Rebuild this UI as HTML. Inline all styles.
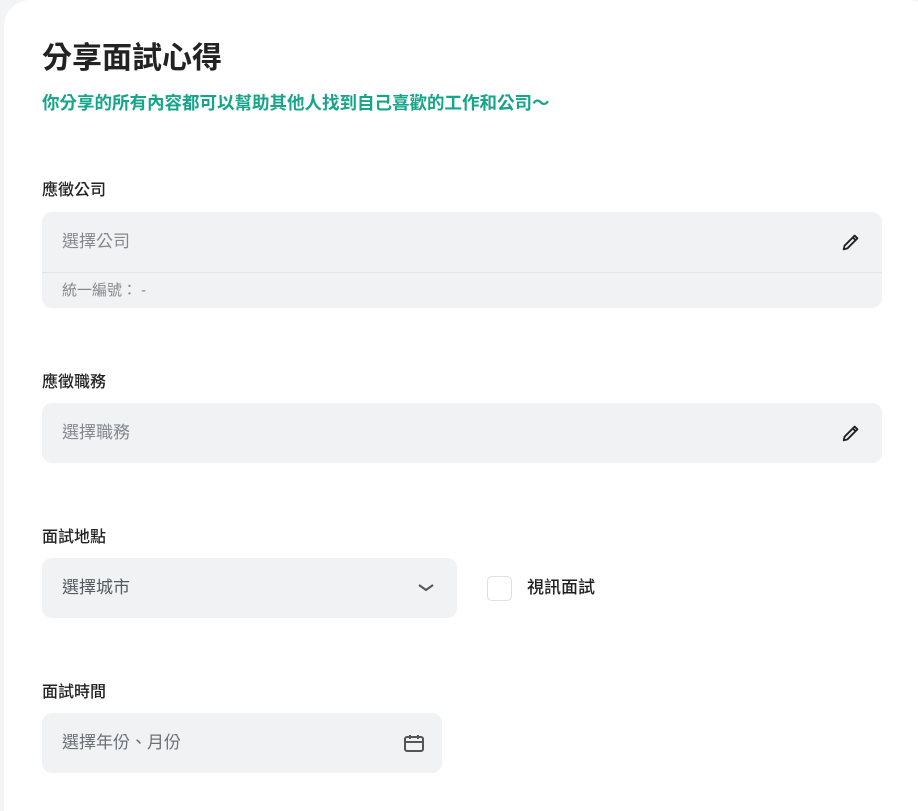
<!DOCTYPE html>
<html><head><meta charset="utf-8"><style>
*{box-sizing:border-box;margin:0;padding:0}
html,body{width:918px;height:811px;overflow:hidden;background:#f3f4f5;font-family:"Liberation Sans","Noto Sans CJK TC",sans-serif;color:#1e1e1e}
.card{position:absolute;left:4px;top:0;width:930px;height:811px;background:#fff;border-radius:26px 26px 0 0}
.a{position:absolute;white-space:nowrap}
h1{position:absolute;left:42px;top:38px;font-size:30px;font-weight:700;line-height:42px;color:#222}
.sub{left:42px;top:91px;font-size:17.5px;font-weight:700;color:#16a58a;line-height:24px}
.lbl{font-size:16px;font-weight:500;line-height:22px;color:#222;left:42px}
.box{position:absolute;background:#f1f2f4;border-radius:10px}
.ph{font-size:17px;color:#85898f;line-height:24px}
</style></head><body>
<div class="card"></div>
<h1>分享面試心得</h1>
<div class="a sub">你分享的所有內容都可以幫助其他人找到自己喜歡的工作和公司～</div>

<div class="a lbl" style="top:180px">應徵公司</div>
<div class="box" style="left:42px;top:212px;width:840px;height:96px">
 <div style="position:absolute;left:0;right:0;top:60px;height:1px;background:#e2e4e7"></div>
</div>
<div class="a ph" style="left:62px;top:230px">選擇公司</div>
<div class="a" style="left:62px;top:280px;font-size:15px;color:#85898f;line-height:22px">統一編號： -</div>
<svg class="a" style="left:840px;top:231px" width="22" height="22" viewBox="0 0 24 24" fill="none" stroke="#222" stroke-width="2" stroke-linejoin="round"><path d="M4 20l1-4L16 5l3 3L8 19z M14 7l3 3"/></svg>

<div class="a lbl" style="top:372px">應徵職務</div>
<div class="box" style="left:42px;top:403px;width:840px;height:60px"></div>
<div class="a ph" style="left:62px;top:421px">選擇職務</div>
<svg class="a" style="left:840px;top:422px" width="22" height="22" viewBox="0 0 24 24" fill="none" stroke="#222" stroke-width="2" stroke-linejoin="round"><path d="M4 20l1-4L16 5l3 3L8 19z M14 7l3 3"/></svg>

<div class="a lbl" style="top:527px">面試地點</div>
<div class="box" style="left:42px;top:558px;width:415px;height:60px"></div>
<div class="a ph" style="left:62px;top:576px;color:#555a60">選擇城市</div>
<svg class="a" style="left:416px;top:580px" width="20" height="16" viewBox="0 0 20 16" fill="none" stroke="#555" stroke-width="2"><path d="M3 5l7 5 7-5"/></svg>
<div class="a" style="left:487px;top:576px;width:25px;height:25px;border:1px solid #dcdfe3;border-radius:5px;background:#fff"></div>
<div class="a" style="left:527px;top:576px;font-size:17px;font-weight:500;line-height:24px">視訊面試</div>

<div class="a lbl" style="top:682px">面試時間</div>
<div class="box" style="left:42px;top:713px;width:400px;height:60px"></div>
<div class="a ph" style="left:62px;top:731px;color:#6b7076">選擇年份、月份</div>
<svg class="a" style="left:402px;top:733px" width="24" height="22" viewBox="0 0 24 22" fill="none" stroke="#555" stroke-width="2"><rect x="3" y="4" width="18" height="14" rx="2"/><path d="M3 9h18M8 2v4M16 2v4"/></svg>
</body></html>
